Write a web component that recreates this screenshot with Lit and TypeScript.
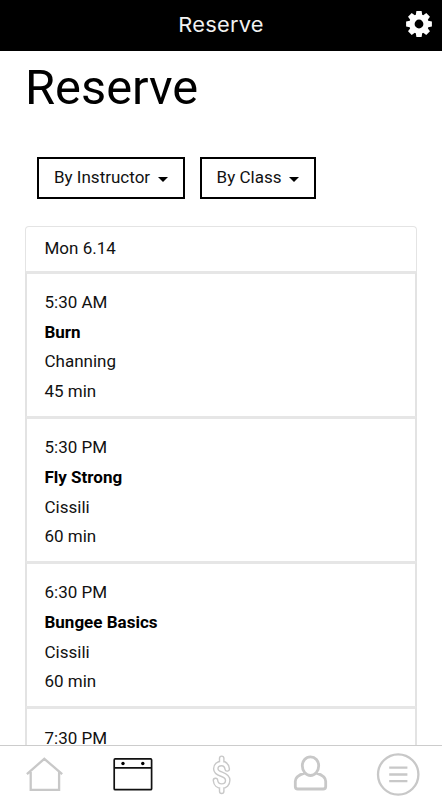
import { LitElement, html, css, svg } from "lit";
import { customElement } from "lit/decorators.js";

interface ClassSlot { time: string; name: string; who: string; length: string; }

const SLOTS: ClassSlot[] = [
  { time: "5:30 AM", name: "Burn", who: "Channing", length: "45 min" },
  { time: "5:30 PM", name: "Fly Strong", who: "Cissili", length: "60 min" },
  { time: "6:30 PM", name: "Bungee Basics", who: "Cissili", length: "60 min" },
  { time: "7:30 PM", name: "", who: "", length: "" },
];

const TEETH = [0, 45, 90, 135, 180, 225, 270, 315];
const DOLLAR = "M17.2 13.6 C16.6 10 14.6 8.2 11.6 8.2 C8.2 8.2 5.8 10.4 5.8 13.4 C5.8 20.4 17.7 17.4 17.7 25 C17.7 28.6 15.2 30.8 11.8 30.8 C8.2 30.8 5.8 28.6 5.5 25.2 M11.7 3 V8.2 M11.7 30.8 V36";

@customElement("app-root")
export class AppRoot extends LitElement {
  static styles = css`
    :host { display: flex; flex-direction: column; height: 800px; overflow: hidden; background: #fff; color: #000; font-family: Roboto, sans-serif; }
    * { box-sizing: border-box; }
    svg { display: block; flex: none; }
    header { height: 51px; flex: none; background: #000; display: grid; grid-template-columns: 46px 1fr 46px; align-items: center; }
    .bar-title { grid-column: 2; text-align: center; color: #f2f2f2; font: 400 20.5px/24px Inter, sans-serif; letter-spacing: 0.2px; transform: scaleX(1.065); margin-top: -1px; }
    main { flex: 1; min-height: 0; overflow: hidden; padding: 0 25px; }
    h1 { margin: 8px 0 0; font-weight: 400; font-size: 48.8px; line-height: 58px; }
    .filters { display: flex; gap: 15px; margin: 40px 0 0 12px; }
    .filter { height: 42px; border: 2px solid #000; display: flex; align-items: center; padding: 0 15px 2px; font-size: 17px; background: #fff; gap: 7.5px; color: #111; }
    .caret { border: 5px solid transparent; border-top-color: #000; border-bottom: 0; margin-top: 5px; }
    .schedule { margin-top: 27px; }
    .day { height: 45px; border: 1px solid #e4e4e4; border-bottom: 0; border-radius: 4px 4px 0 0; padding: 0 18.5px; font-size: 17px; line-height: 43px; color: #111; }
    .slot { height: 145.1px; border: 2px solid #e3e3e3; border-top-width: 3px; border-top-color: #e6e6e6; border-bottom: 0; padding: 14.3px 17.5px 0; font-size: 17px; line-height: 29.6px; color: #111; }
    .name { font-weight: 700; color: #000; }
    nav { height: 55px; flex: none; border-top: 1px solid #ccc; display: grid; grid-template-columns: repeat(5, 1fr); justify-items: center; background: #fff; }
    .tab { display: flex; width: 88.4px; justify-content: center; }
    .icon { fill: none; stroke: #c8c8c8; }
    .active { stroke: #111; }
  `;

  private tab(body: unknown, active = false) {
    return html`<div class="tab"><svg class="icon ${active ? "active" : ""}" width="88" height="54" viewBox="0 0 88 54">${body}</svg></div>`;
  }

  render() {
    return html`
      <header>
        <div class="bar-title">Reserve</div>
        <svg width="46" height="51" viewBox="0 0 46 51">
          <g transform="translate(23 24)" fill="#fff">
            ${TEETH.map(a => svg`<path transform="rotate(${a})" d="M-3.4 -8 L-2.6 -12.9 H2.6 L3.4 -8 Z"/>`)}
            <circle r="7.1" fill="none" stroke="#fff" stroke-width="5.4"/>
          </g>
        </svg>
      </header>
      <main>
        <h1>Reserve</h1>
        <div class="filters">
          <div class="filter">By Instructor<span class="caret"></span></div>
          <div class="filter">By Class<span class="caret"></span></div>
        </div>
        <section class="schedule">
          <div class="day">Mon 6.14</div>
          ${SLOTS.map(s => html`<div class="slot">
            <div>${s.time}</div><div class="name">${s.name}</div><div>${s.who}</div><div>${s.length}</div>
          </div>`)}
        </section>
      </main>
      <nav>
        ${this.tab(svg`<path stroke-width="2.3" d="M26.9 28.2 L44.3 12.8 L62.2 28.2 M30.7 26 V43.8 H59.1 V26"/>`)}
        ${this.tab(svg`<rect x="25.2" y="12.9" width="37.4" height="30.8" rx="1" stroke-width="1.7"/><path stroke-width="1.7" d="M25 21.8 H62.8"/><circle cx="34" cy="17.5" r="1.7" fill="#000" stroke="none"/><circle cx="53.8" cy="17.5" r="1.7" fill="#000" stroke="none"/>`, true)}
        ${this.tab(svg`<g transform="translate(33 9.3)"><path d=${DOLLAR} stroke-width="5.8" stroke-linecap="round"/><path d=${DOLLAR} stroke="#fff" stroke-width="3" stroke-linecap="round"/></g>`)}
        ${this.tab(svg`<path transform="translate(.5 .3)" stroke-width="2.8" d="M45 10.6 C49.8 10.6 53.2 14.5 53.2 19.5 C53.2 24.6 49.5 29.2 45 29.2 C40.5 29.2 36.8 24.6 36.8 19.5 C36.8 14.5 40.2 10.6 45 10.6 Z M38.8 26.8 C33.4 28.6 29.8 31 29.8 35 V40.2 Q29.8 42.7 32.3 42.7 H57.7 Q60.2 42.7 60.2 40.2 V35 C60.2 31 56.6 28.6 51.2 26.8"/>`)}
        ${this.tab(svg`<circle cx="44.2" cy="28.5" r="20.2" stroke-width="2.3"/><path stroke-width="2.3" d="M35.2 21.7 H53.4 M35.2 28.5 H53.4 M35.2 35.2 H53.4"/>`)}
      </nav>`;
  }
}
